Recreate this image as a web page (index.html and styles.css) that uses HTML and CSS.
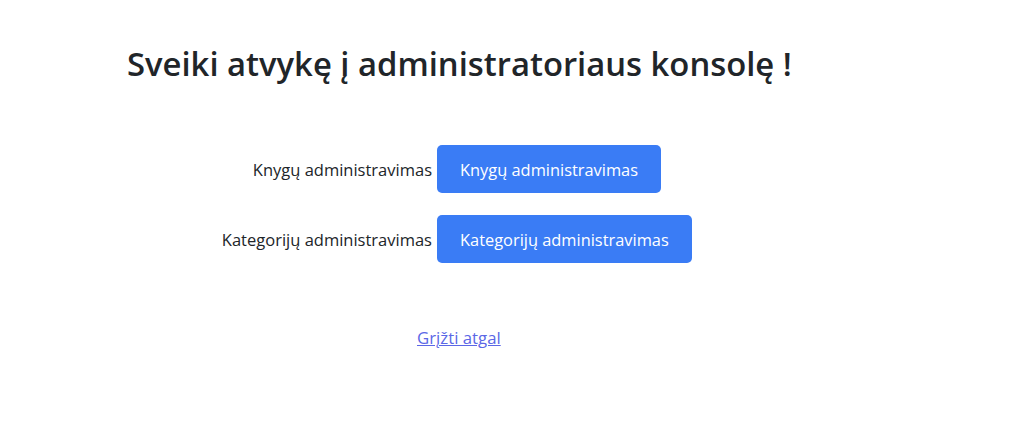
FILE: index.html
```html
<!DOCTYPE html>
<html lang="lt">
<head>
<meta charset="utf-8">
<title>Administratoriaus konsolė</title>
<link rel="stylesheet" href="styles.css">
</head>
<body>
<main class="page">
  <h2 class="title">Sveiki atvykę į administratoriaus konsolę !</h2>
  <div class="admin-form">
    <label class="row-label">Knygų administravimas</label>
    <a class="btn-admin" href="#">Knygų administravimas</a>
    <label class="row-label">Kategorijų administravimas</label>
    <a class="btn-admin" href="#">Kategorijų administravimas</a>
  </div>
  <a class="back-link" href="#">Grįžti atgal</a>
</main>
</body>
</html>
```
FILE: styles.css
```css
html, body {
  margin: 0;
  background: #ffffff;
}
body {
  font-family: "Open Sans", "Noto Sans", "DejaVu Sans", sans-serif;
  color: #212529;
}
.page {
  padding: 44px 0 0 127px;
  display: flex;
  flex-direction: column;
  align-items: flex-start;
}
.title {
  margin: 0;
  font-size: 32.8px;
  font-weight: 600;
  line-height: 1.2;
  color: #212529;
}
.admin-form {
  margin-top: 62px;
  display: grid;
  grid-template-columns: 305px auto;
  column-gap: 5px;
  row-gap: 22px;
  align-items: center;
  justify-items: start;
}
.row-label {
  justify-self: end;
  font-size: 16.5px;
  color: #212529;
}
.btn-admin {
  display: flex;
  align-items: center;
  height: 48px;
  box-sizing: border-box;
  padding: 0 23px;
  background: #3a7cf5;
  color: #ffffff;
  font-size: 16.4px;
  text-decoration: none;
  border-radius: 5px;
}
.back-link {
  margin-top: 63px;
  margin-left: 290px;
  font-size: 16.8px;
  color: #5b67e6;
  text-decoration: underline;
}
```
